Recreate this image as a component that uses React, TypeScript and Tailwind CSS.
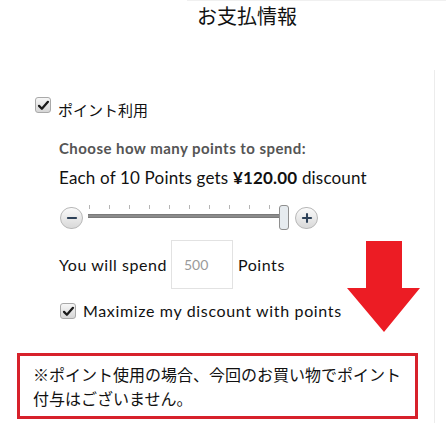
import React from 'react';
import { Minus, Plus } from 'lucide-react';

const CheckBox: React.FC = () => (
  <div className="w-[16px] h-[16px] shrink-0 rounded-[3px] border border-[#a9a9a9] bg-gradient-to-b from-[#f7f7f7] to-[#d6d6d6] flex items-center justify-center">
    <svg viewBox="0 0 16 16" className="w-[13px] h-[13px]">
      <path d="M2.5 8.5 L6 12 L13.5 3.5" fill="none" stroke="#1a1a1a" strokeWidth="2.8" strokeLinecap="round" strokeLinejoin="round" />
    </svg>
  </div>
);

const RoundButton: React.FC<{ children: React.ReactNode }> = ({ children }) => (
  <div className="w-[23px] h-[22px] shrink-0 rounded-full border border-[#b8b8b8] bg-gradient-to-b from-[#fafafa] to-[#d9d9d9] flex items-center justify-center text-[#2d4158]">
    {children}
  </div>
);

const PointSlider: React.FC = () => {
  const ticks = [1, 21, 41, 61, 81, 101, 121, 141, 161, 181];
  return (
    <div className="flex items-center h-[26px]">
      <RoundButton>
        <Minus className="w-[14px] h-[14px]" strokeWidth={3.5} />
      </RoundButton>
      <div className="relative ml-[5px] w-[192px] h-[26px]">
        {ticks.map((t) => (
          <div key={t} className="absolute top-0 w-px h-[4px] bg-[#b5b5b5]" style={{ left: t }} />
        ))}
        <div className="absolute left-0 right-0 top-[9px] h-[4px] bg-[#8c8c8c] border-y border-[#7a7a7a]" />
        {/* thumb */}
        <div className="absolute right-[-9px] top-0 w-[10px] h-[25px] rounded-[3px] border border-[#8f8f8f] bg-[#e6ebef]" />
      </div>
      <div className="ml-[15px]">
        <RoundButton>
          <Plus className="w-[14px] h-[14px]" strokeWidth={3.5} />
        </RoundButton>
      </div>
    </div>
  );
};

const App: React.FC = () => {
  return (
    <div
      className="relative w-[446px] h-[441px] bg-white overflow-hidden text-[#111]"
      style={{ fontFamily: 'Lato, "Noto Sans CJK JP", sans-serif' }}
    >
      <div className="ml-[187px] h-px bg-[#f0f0f0]" />
      <h2 className="pl-[48px] text-center text-[20px] leading-[29px] font-normal" style={{ fontFamily: '"Noto Sans CJK JP", sans-serif' }}>
        お支払情報
      </h2>

      {/* points panel */}
      <div className="mt-[40px] mr-[11px] border-r border-[#ececec] pb-[4px]">
        <div className="pt-[27px] pl-[35px] flex items-start gap-[7px]">
          <CheckBox />
          <span className="pt-[3px] text-[15px] leading-[20px]" style={{ fontFamily: '"Noto Sans CJK JP", sans-serif' }}>
            ポイント利用
          </span>
        </div>

        <div className="pl-[59px]">
          <p className="mt-[18px] text-[15px] leading-[20px] font-bold tracking-[0.45px] text-[#555]">
            Choose how many points to spend:
          </p>
          <p className="mt-[8px] text-[17px] leading-[24px] tracking-[0.18px]">
            Each of 10 Points gets <span className="font-bold">¥120.00</span> discount
          </p>

          <div className="mt-[15px] pl-px">
            <PointSlider />
          </div>

          <div className="mt-[9px] flex items-center text-[16px] tracking-[0.55px]">
            <span>You will spend</span>
            <div className="ml-[4px] w-[62px] h-[49px] border border-[#e2e2e2] flex items-center pl-[12px] text-[14px] tracking-normal text-[#9a9a9a]">
              500
            </div>
            <span className="ml-[5px]">Points</span>
          </div>

          <div className="mt-[12px] pl-px flex items-center gap-[7px]">
            <CheckBox />
            <span className="text-[16px] leading-[20px] tracking-[0.65px]">Maximize my discount with points</span>
          </div>
        </div>

        <div
          className="mt-[32px] ml-[17px] w-[401px] border-[3px] border-[#d7212b] pl-[13px] pt-[6px] pb-[6px] text-[16px] leading-[24px] text-[#111]"
          style={{ fontFamily: '"Noto Sans CJK JP", sans-serif' }}
        >
          ※ポイント使用の場合、今回のお買い物でポイント
          <br />
          付与はございません。
        </div>
      </div>

      {/* annotation arrow */}
      <svg className="absolute left-[347px] top-[241px]" width="74" height="92" viewBox="0 0 74 92">
        <path d="M19 0 H55 V47 H73 L37 91 L0 47 H19 Z" fill="#ec1c24" />
      </svg>
    </div>
  );
};

export default App;
